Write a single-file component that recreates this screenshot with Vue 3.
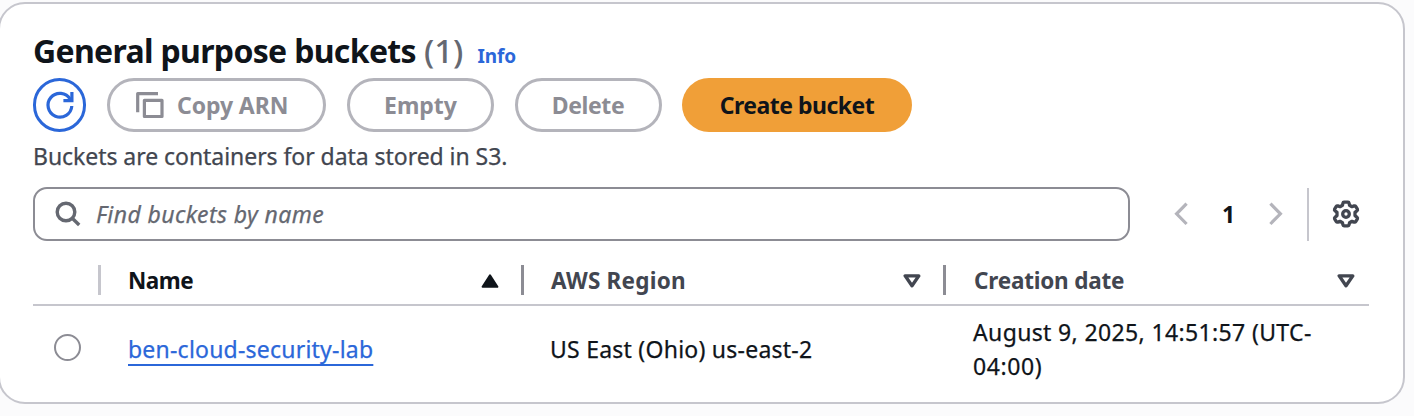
<script setup>
const columns = [
  { label: 'Name', key: 'name', sorted: true },
  { label: 'AWS Region', key: 'region', sorted: false },
  { label: 'Creation date', key: 'created', sorted: false },
]
</script>

<template>
  <section class="card">
    <header class="title">
      <h2>General purpose buckets</h2>
      <span class="count">(1)</span>
      <a class="info">Info</a>
    </header>

    <div class="actions">
      <button class="btn refresh" aria-label="Refresh">
        <svg width="54" height="54" viewBox="0 0 54 54" fill="none" stroke="currentColor" stroke-width="3.2">
          <path d="M38.8 28A11.9 11.9 0 1 1 37.2 21.2" />
          <path d="M38.9 14V22.6H30.4" />
        </svg>
      </button>
      <button class="btn copy" disabled>
        <svg width="28" height="28" viewBox="0 0 28 28" fill="none" stroke="currentColor" stroke-width="3.2">
          <path d="M1.7 21.2V2.6H22" stroke-linejoin="round" />
          <path d="M8.4 9.3H26V25.5H8.4Z" stroke-linejoin="round" />
        </svg>
        <span>Copy ARN</span>
      </button>
      <button class="btn empty" disabled>Empty</button>
      <button class="btn delete" disabled>Delete</button>
      <button class="btn create">Create bucket</button>
    </div>

    <p class="desc">Buckets are containers for data stored in S3.</p>

    <div class="tools">
      <div class="search">
        <svg width="26" height="26" viewBox="0 0 26 26" fill="none" stroke="currentColor" stroke-width="3.4">
          <circle cx="11" cy="11" r="8.8" />
          <path d="M17 17L24.2 24" />
        </svg>
        <span>Find buckets by name</span>
      </div>
      <nav class="pages">
        <svg width="14" height="24" viewBox="0 0 14 24" fill="none" stroke="currentColor" stroke-width="3.2">
          <path d="M12.6 1.6L2.6 11.8L12.6 22" />
        </svg>
        <b>1</b>
        <svg width="14" height="24" viewBox="0 0 14 24" fill="none" stroke="currentColor" stroke-width="3.2">
          <path d="M1.4 1.6L11.4 11.8L1.4 22" />
        </svg>
      </nav>
      <div class="settings">
        <svg width="28" height="28" viewBox="-14 -14 28 28" fill="none" stroke="currentColor" stroke-width="3.3" stroke-linejoin="round">
          <path d="M-2 -11.9H2Q2.9 -11.9 3.1 -10.8L3.5 -8.7L6 -7.3L8.1 -8.1Q9.2 -8.4 9.7 -7.6L11.4 -4.8Q11.8 -3.9 11 -3.2L9 -1.6V1.6L11 3.2Q11.8 3.9 11.4 4.8L9.7 7.6Q9.2 8.4 8.1 8.1L6 7.3L3.5 8.7L3.1 10.8Q2.9 11.9 2 11.9H-2Q-2.9 11.9 -3.1 10.8L-3.5 8.7L-6 7.3L-8.1 8.1Q-9.2 8.4 -9.7 7.6L-11.4 4.8Q-11.8 3.9 -11 3.2L-9 1.6V-1.6L-11 -3.2Q-11.8 -3.9 -11.4 -4.8L-9.7 -7.6Q-9.2 -8.4 -8.1 -8.1L-6 -7.3L-3.5 -8.7L-3.1 -10.8Q-2.9 -11.9 -2 -11.9Z" />
          <circle r="3.3" />
        </svg>
      </div>
    </div>

    <div class="grid head">
      <div class="cell select"></div>
      <div v-for="c in columns" :key="c.key" class="cell" :class="[c.key, { sorted: c.sorted }]">
        <span class="label">{{ c.label }}</span>
        <svg width="18" height="14" viewBox="0 0 18 14" stroke="currentColor" stroke-linejoin="round">
          <path v-if="c.sorted" d="M9 1.4L16.4 12.8H1.6Z" fill="currentColor" stroke-width="2" />
          <path v-else d="M2.2 1.9H15.8L9 11.8Z" fill="none" stroke-width="3.4" />
        </svg>
      </div>
    </div>

    <div class="grid row">
      <div class="pick"><span class="radio"></span></div>
      <div class="val"><a class="link">ben-cloud-security-lab</a></div>
      <div class="val place">US East (Ohio) us-east-2</div>
      <div class="val date">August 9, 2025, 14:51:57 (UTC-<br /><span>04:00)</span></div>
    </div>
  </section>
</template>

<style>
body {
  background: #fbfbfc;
  overflow: hidden;
}
</style>

<style scoped>
.card {
  box-sizing: border-box;
  width: 1407px;
  height: 402px;
  margin: 2px 0 0 -2px;
  padding: 26px 34px 0 33px;
  border: 2px solid #c6c6cd;
  border-radius: 27px;
  background: #fff;
  color: #0f141a;
  font: 400 23px/34px "Noto Sans", "Open Sans", sans-serif;
}
svg { display: block; flex: none; }
.title {
  display: flex;
  align-items: baseline;
  height: 48px;
  line-height: 42px;
}
h2 {
  margin: 0;
  font-size: 32px;
  font-weight: 700;
  line-height: 42px;
  letter-spacing: -0.67px;
}
.count {
  margin-left: 8px;
  color: #656871;
  font-size: 33px;
  font-weight: 500;
}
.info {
  margin-left: 14px;
  color: #2b67d9;
  font-size: 19px;
  font-weight: 700;
  letter-spacing: -0.1px;
}
.actions {
  display: flex;
  height: 54px;
}
.btn {
  box-sizing: border-box;
  display: flex;
  align-items: center;
  justify-content: center;
  height: 54px;
  margin: 0 21px 0 0;
  padding: 0;
  border: 3px solid #b4b4bb;
  border-radius: 27px;
  background: #fff;
  color: #8c8c94;
  font: 700 23px/34px "Noto Sans", "Open Sans", sans-serif;
}
.refresh {
  width: 53px;
  border-color: #2b67d9;
  color: #2b67d9;
}
.copy {
  width: 219px;
  justify-content: flex-start;
  gap: 13px;
  padding-left: 26px;
}
.copy span { letter-spacing: -0.1px; }
.empty { width: 147px; }
.delete { width: 147px; margin-right: 20px; padding-right: 1px; letter-spacing: -0.4px; }
.create {
  width: 230px;
  border: 0;
  background: #f09f38;
  color: #0f141a;
  letter-spacing: -0.5px;
}
.desc,
.search span,
.val { -webkit-text-stroke: 0.25px currentColor; }
.desc {
  margin: 7px 0 14px;
  color: #424650;
  letter-spacing: -0.05px;
}
.tools {
  display: flex;
  align-items: center;
  height: 54px;
}
.search {
  box-sizing: border-box;
  display: flex;
  align-items: center;
  gap: 15px;
  width: 1097px;
  height: 54px;
  padding-left: 20px;
  border: 2px solid #8c8c94;
  border-radius: 14px;
  color: #656871;
  font-style: italic;
  letter-spacing: 0.4px;
}
.pages {
  display: flex;
  align-items: center;
  margin-left: 44px;
  color: #b4b4bb;
}
.pages b {
  width: 81px;
  color: #0f141a;
  text-align: center;
}
.settings {
  display: flex;
  align-items: center;
  height: 53px;
  margin-left: 24px;
  padding-left: 23px;
  border-left: 2px solid #c6c6cd;
  color: #424650;
}
.grid {
  display: grid;
  grid-template-columns: 68px 423px 422px 423px;
}
.head {
  padding: 24px 0 9px;
  border-bottom: 2px solid #c6c6cd;
  color: #424650;
  font-size: 22.5px;
  font-weight: 700;
  line-height: 30px;
}
.cell {
  box-sizing: border-box;
  display: flex;
  align-items: center;
  justify-content: space-between;
  height: 30px;
  padding: 0 22px 0 27px;
  border-right: 3px solid #8c8c94;
}
.cell svg { margin-top: 1px; }
.label { padding-top: 2px; }
.select { border-color: #c6c6cd; }
.name { letter-spacing: -0.45px; }
.region { letter-spacing: 0.23px; }
.created {
  padding: 0 14px 0 28px;
  border: 0;
  letter-spacing: -0.2px;
}
.sorted { color: #0f141a; }
.row {
  align-items: center;
  height: 86px;
}
.val { padding-left: 27px; }
.place { padding-left: 26px; letter-spacing: 0.24px; }
.date { letter-spacing: 0.36px; }
.date span { letter-spacing: 0.6px; }
.link {
  color: #2b67d9;
  letter-spacing: 0.22px;
  text-decoration: underline;
  text-decoration-thickness: 2px;
  text-underline-offset: 6px;
}
.pick { padding-left: 21px; }
.radio {
  box-sizing: border-box;
  display: block;
  width: 27px;
  height: 27px;
  margin-bottom: 3px;
  border: 2px solid #8c8c94;
  border-radius: 50%;
}
</style>
